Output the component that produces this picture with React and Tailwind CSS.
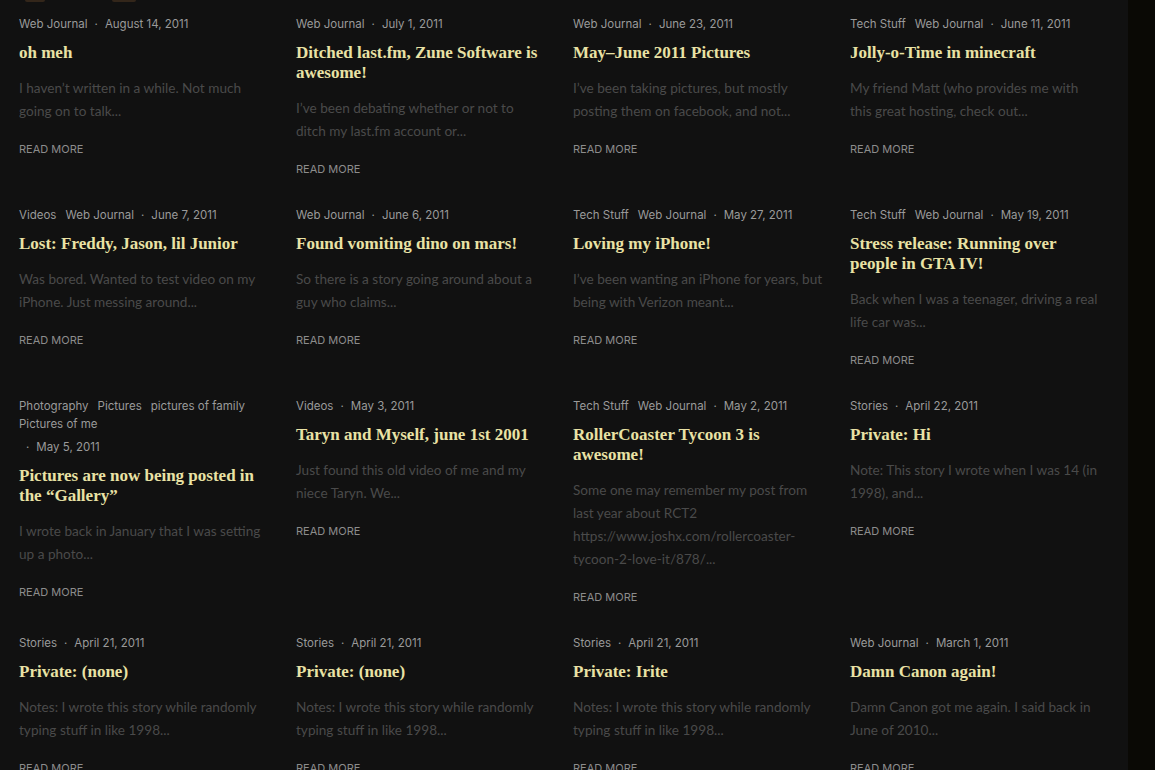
import React from 'react';

const posts = [
  { cats: ['Web Journal'], date: 'August 14, 2011', title: 'oh meh', excerpt: 'I haven’t written in a while. Not much going on to talk...' },
  { cats: ['Web Journal'], date: 'July 1, 2011', title: 'Ditched last.fm, Zune Software is awesome!', excerpt: 'I’ve been debating whether or not to ditch my last.fm account or...' },
  { cats: ['Web Journal'], date: 'June 23, 2011', title: 'May–June 2011 Pictures', excerpt: 'I’ve been taking pictures, but mostly posting them on facebook, and not...' },
  { cats: ['Tech Stuff', 'Web Journal'], date: 'June 11, 2011', title: 'Jolly-o-Time in minecraft', excerpt: 'My friend Matt (who provides me with this great hosting, check out...' },
  { cats: ['Videos', 'Web Journal'], date: 'June 7, 2011', title: 'Lost: Freddy, Jason, lil Junior', excerpt: 'Was bored. Wanted to test video on my iPhone. Just messing around...' },
  { cats: ['Web Journal'], date: 'June 6, 2011', title: 'Found vomiting dino on mars!', excerpt: 'So there is a story going around about a guy who claims...' },
  { cats: ['Tech Stuff', 'Web Journal'], date: 'May 27, 2011', title: 'Loving my iPhone!', excerpt: 'I’ve been wanting an iPhone for years, but being with Verizon meant...' },
  { cats: ['Tech Stuff', 'Web Journal'], date: 'May 19, 2011', title: 'Stress release: Running over people in GTA IV!', excerpt: 'Back when I was a teenager, driving a real life car was...' },
  { cats: ['Photography', 'Pictures', 'pictures of family', 'Pictures of me'], date: 'May 5, 2011', title: 'Pictures are now being posted in the “Gallery”', excerpt: 'I wrote back in January that I was setting up a photo...' },
  { cats: ['Videos'], date: 'May 3, 2011', title: 'Taryn and Myself, june 1st 2001', excerpt: 'Just found this old video of me and my niece Taryn. We...' },
  { cats: ['Tech Stuff', 'Web Journal'], date: 'May 2, 2011', title: 'RollerCoaster Tycoon 3 is awesome!', excerpt: 'Some one may remember my post from last year about RCT2 https://www.joshx.com/rollercoaster-tycoon-2-love-it/878/...' },
  { cats: ['Stories'], date: 'April 22, 2011', title: 'Private: Hi', excerpt: 'Note: This story I wrote when I was 14 (in 1998), and...' },
  { cats: ['Stories'], date: 'April 21, 2011', title: 'Private: (none)', excerpt: 'Notes: I wrote this story while randomly typing stuff in like 1998...' },
  { cats: ['Stories'], date: 'April 21, 2011', title: 'Private: (none)', excerpt: 'Notes: I wrote this story while randomly typing stuff in like 1998...' },
  { cats: ['Stories'], date: 'April 21, 2011', title: 'Private: Irite', excerpt: 'Notes: I wrote this story while randomly typing stuff in like 1998...' },
  { cats: ['Web Journal'], date: 'March 1, 2011', title: 'Damn Canon again!', excerpt: 'Damn Canon got me again. I said back in June of 2010...' },
];

function PostCard({ post }) {
  return (
    <article className="flex flex-col">
      <div className="flex flex-wrap items-center gap-y-[5px] text-[11.5px] leading-[18px] text-[#9a9a9a] font-['Inter',sans-serif]">
        <div className="flex flex-wrap gap-x-[9px]">
          {post.cats.map((c) => (
            <a key={c} href="#" className="hover:text-[#e9e2a5]">{c}</a>
          ))}
        </div>
        <span>
          <span className="mx-[7px]">·</span>
          {post.date}
        </span>
      </div>
      <h2 className="mt-[10px] text-[17px] leading-[20px] font-bold text-[#e9e2a5] font-['Liberation_Serif',serif]">
        <a href="#">{post.title}</a>
      </h2>
      <p className="mt-[14px] text-[13.6px] leading-[23px] text-[#4a4a4a] font-['Lato',sans-serif] break-words">
        {post.excerpt}
      </p>
      <a href="#" className="mt-[18px] text-[11px] leading-[16px] uppercase text-[#8c8c8c] font-['Inter',sans-serif] hover:text-[#e9e2a5]">
        Read More
      </a>
    </article>
  );
}

export default function App() {
  return (
    <div className="flex min-h-screen bg-[#111111]">
      <main className="flex-1">
        <div className="flex h-[2px] overflow-hidden">
          <span className="ml-[25px] h-[2px] w-[20px] rounded-b-full bg-[#33261a]" />
          <span className="ml-[67px] h-[2px] w-[24px] rounded-b-full bg-[#33261a]" />
        </div>
        <div className="grid grid-cols-4 items-start gap-x-[27px] gap-y-[29px] pl-[19px] pr-[28px] pt-[13px] pb-10">
          {posts.map((p, i) => (
            <PostCard key={i} post={p} />
          ))}
        </div>
      </main>
      <aside className="w-[27px] shrink-0 bg-[#0a0905]" />
    </div>
  );
}
